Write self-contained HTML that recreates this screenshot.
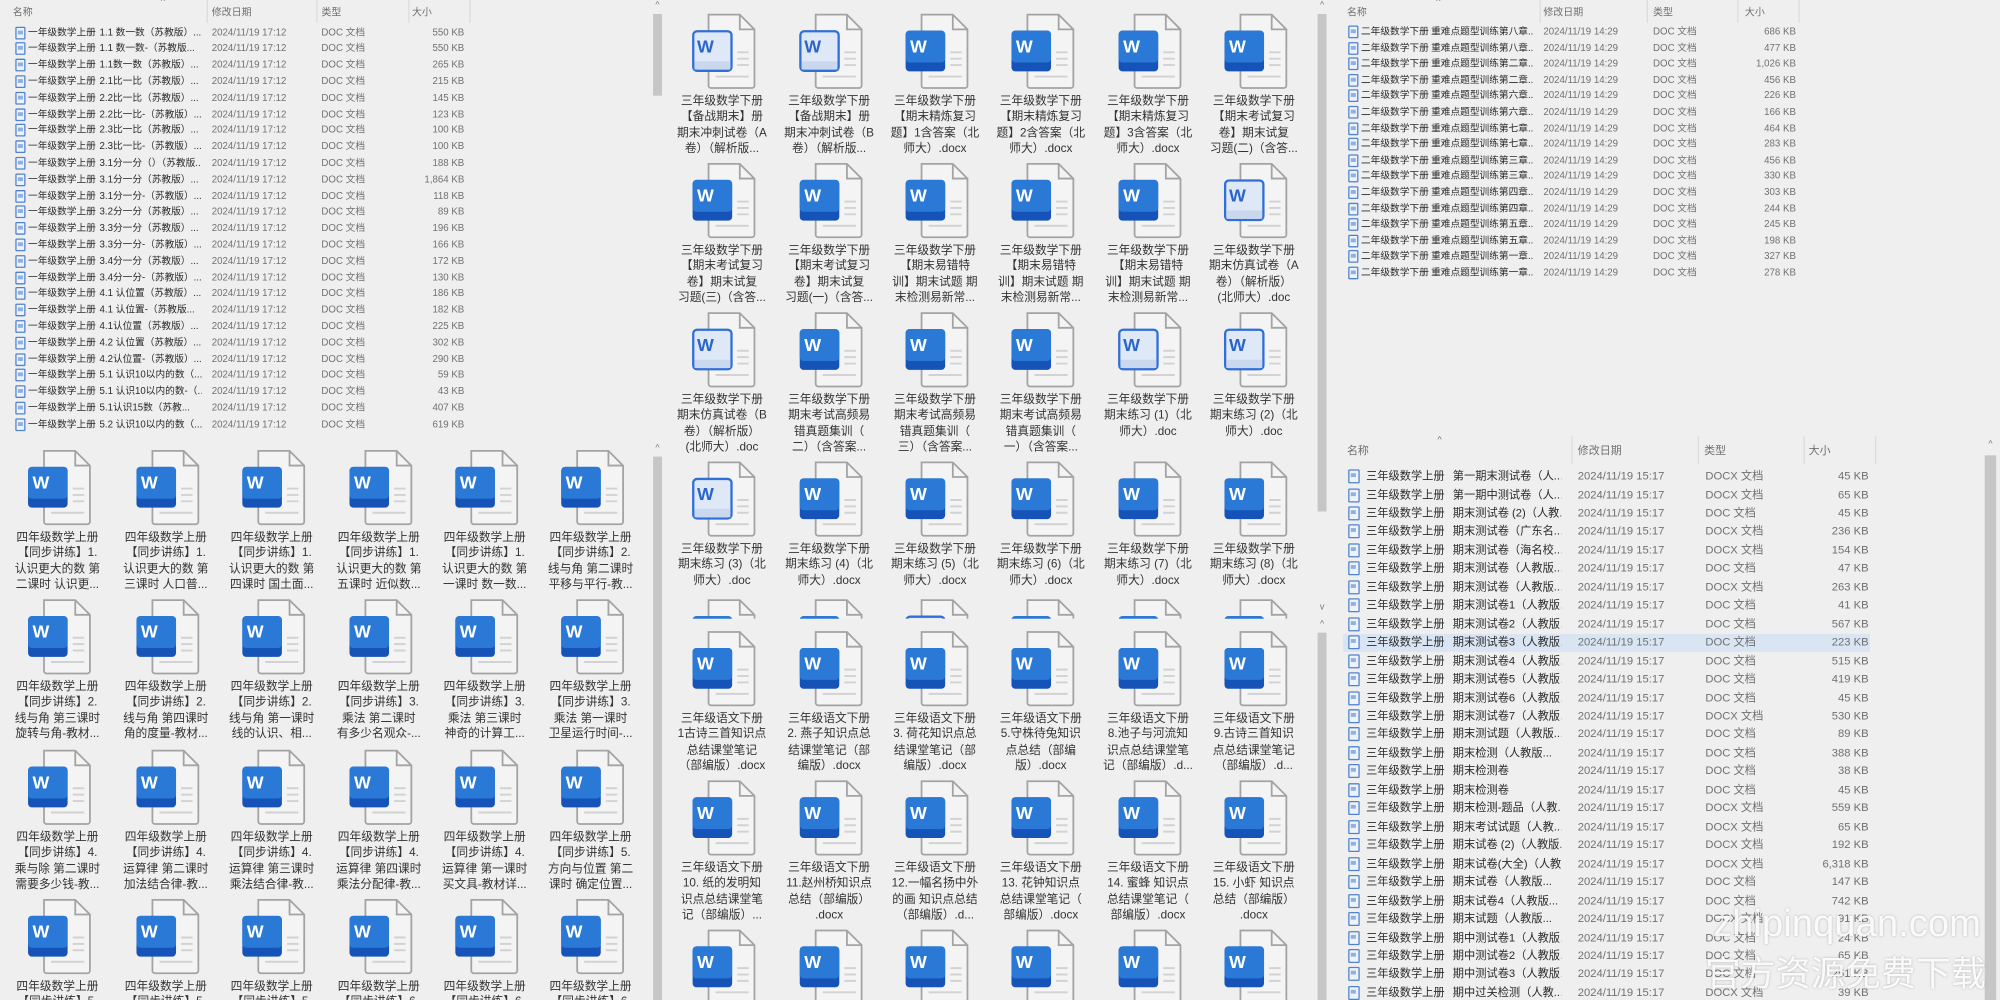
<!DOCTYPE html>
<html><head><meta charset="utf-8"><style>
html,body{margin:0;padding:0;width:2000px;height:1000px;overflow:hidden;background:#efefef}
#s{position:absolute;left:0;top:0;width:1568px;height:784px;transform:scale(1.27551);transform-origin:0 0;font-family:"Liberation Sans","Noto Sans CJK SC",sans-serif;color:#2a2a2a}
.a{position:absolute}
.win{position:absolute;overflow:hidden}
.row{position:absolute;height:10px;line-height:10px;font-size:7.6px;white-space:nowrap;left:0;right:0}
.row span{position:absolute;top:0}
.ic{width:6px;height:8px;border:1px solid #4f82cf;border-radius:1px;background:#eef3fb;top:0 !important}
.ic:after{content:"";position:absolute;left:1px;top:2px;width:4px;height:3px;background:#8fb0e3}
.n1{color:#2a2a2a}.n2{color:#2a2a2a;overflow:hidden;width:80px}
.d,.t{color:#707070}.sz{color:#707070;text-align:right;width:60px}
.hd{position:absolute;font-size:7.8px;color:#707070;white-space:nowrap}
.sep{position:absolute;width:1px;background:#dcdcdc}
.g{position:absolute;width:84px;text-align:center}
.g svg{display:block;width:52px;height:60px;margin:0 0 0 17px}
.g p{margin:3px 0 0 0;font-size:9.2px;line-height:12.3px;color:#333;white-space:nowrap}
.sb{position:absolute;background:#c6c6c6;width:7px}
.ar{position:absolute;font-size:7px;color:#777;width:9px;text-align:center}
.rb .row{height:12px;line-height:12px;font-size:8.8px}
.rb .ic{width:7px;height:9px;top:1px !important}
.rb .n2{width:85px}
</style></head><body>
<svg width="0" height="0" style="position:absolute"><defs>
<symbol id="w" viewBox="0 0 52 60">
<path d="M14.5 1.5H39L50.5 13V57a2 2 0 0 1-2 2H16.5a2 2 0 0 1-2-2Z" fill="#f4f4f4" stroke="#a3a3a3" stroke-width="1.4"/>
<path d="M39 1.5V13H50.5" fill="none" stroke="#a3a3a3" stroke-width="1.4"/>
<path d="M37 31h9M37 36h9M37 41h9M20 50h26" stroke="#d2d2d2" stroke-width="1.5"/>
<rect x="2" y="14" width="31" height="32" rx="3" fill="#1553b8"/>
<rect x="2" y="14" width="31" height="25" rx="3" fill="#2a79d6"/>
<text x="5.5" y="31" font-family="Liberation Sans" font-weight="bold" font-size="14" fill="#fff">W</text>
</symbol>
<symbol id="l" viewBox="0 0 52 60">
<path d="M14.5 1.5H39L50.5 13V57a2 2 0 0 1-2 2H16.5a2 2 0 0 1-2-2Z" fill="#f4f4f4" stroke="#a3a3a3" stroke-width="1.4"/>
<path d="M39 1.5V13H50.5" fill="none" stroke="#a3a3a3" stroke-width="1.4"/>
<path d="M37 31h9M37 36h9M37 41h9M20 50h26" stroke="#d2d2d2" stroke-width="1.5"/>
<rect x="2.5" y="14.5" width="30" height="31" rx="3" fill="#dfe8f6" stroke="#2f6fd6" stroke-width="1.8"/>
<rect x="3.5" y="38" width="28" height="6.5" fill="#c9d8ef"/>
<text x="5.5" y="31" font-family="Liberation Sans" font-weight="bold" font-size="14" fill="#2a66c9">W</text>
</symbol>
</defs></svg>
<div id="s">

<!-- LEFT TOP LIST -->
<div class="win" style="left:0;top:0;width:512px;height:346px">
<div class="hd" style="left:10px;top:4px">名称</div><div class="hd" style="left:126px;top:-2px;font-size:7px">^</div>
<div class="hd" style="left:166px;top:4px">修改日期</div><div class="hd" style="left:252px;top:4px">类型</div><div class="hd" style="left:323px;top:4px">大小</div>
<div class="sep" style="left:162px;top:0;height:18px"></div><div class="sep" style="left:248px;top:0;height:18px"></div><div class="sep" style="left:320px;top:0;height:18px"></div><div class="sep" style="left:368px;top:0;height:18px"></div>
<div class="row" style="top:20.5px"><span class="ic" style="left:12px"></span><span class="n1" style="left:22px">一年级数学上册</span><span class="n2" style="left:78px">1.1  数一数（苏教版）...</span><span class="d" style="left:166px">2024/11/19 17:12</span><span class="t" style="left:252px">DOC 文档</span><span class="sz" style="left:304px">550 KB</span></div>
<div class="row" style="top:33.3px"><span class="ic" style="left:12px"></span><span class="n1" style="left:22px">一年级数学上册</span><span class="n2" style="left:78px">1.1  数一数-（苏教版...</span><span class="d" style="left:166px">2024/11/19 17:12</span><span class="t" style="left:252px">DOC 文档</span><span class="sz" style="left:304px">550 KB</span></div>
<div class="row" style="top:46.1px"><span class="ic" style="left:12px"></span><span class="n1" style="left:22px">一年级数学上册</span><span class="n2" style="left:78px">1.1数一数（苏教版）...</span><span class="d" style="left:166px">2024/11/19 17:12</span><span class="t" style="left:252px">DOC 文档</span><span class="sz" style="left:304px">265 KB</span></div>
<div class="row" style="top:58.9px"><span class="ic" style="left:12px"></span><span class="n1" style="left:22px">一年级数学上册</span><span class="n2" style="left:78px">2.1比一比（苏教版）...</span><span class="d" style="left:166px">2024/11/19 17:12</span><span class="t" style="left:252px">DOC 文档</span><span class="sz" style="left:304px">215 KB</span></div>
<div class="row" style="top:71.7px"><span class="ic" style="left:12px"></span><span class="n1" style="left:22px">一年级数学上册</span><span class="n2" style="left:78px">2.2比一比（苏教版）...</span><span class="d" style="left:166px">2024/11/19 17:12</span><span class="t" style="left:252px">DOC 文档</span><span class="sz" style="left:304px">145 KB</span></div>
<div class="row" style="top:84.5px"><span class="ic" style="left:12px"></span><span class="n1" style="left:22px">一年级数学上册</span><span class="n2" style="left:78px">2.2比一比-（苏教版）...</span><span class="d" style="left:166px">2024/11/19 17:12</span><span class="t" style="left:252px">DOC 文档</span><span class="sz" style="left:304px">123 KB</span></div>
<div class="row" style="top:97.3px"><span class="ic" style="left:12px"></span><span class="n1" style="left:22px">一年级数学上册</span><span class="n2" style="left:78px">2.3比一比（苏教版）...</span><span class="d" style="left:166px">2024/11/19 17:12</span><span class="t" style="left:252px">DOC 文档</span><span class="sz" style="left:304px">100 KB</span></div>
<div class="row" style="top:110.1px"><span class="ic" style="left:12px"></span><span class="n1" style="left:22px">一年级数学上册</span><span class="n2" style="left:78px">2.3比一比-（苏教版）...</span><span class="d" style="left:166px">2024/11/19 17:12</span><span class="t" style="left:252px">DOC 文档</span><span class="sz" style="left:304px">100 KB</span></div>
<div class="row" style="top:122.9px"><span class="ic" style="left:12px"></span><span class="n1" style="left:22px">一年级数学上册</span><span class="n2" style="left:78px">3.1分一分（）（苏教版...</span><span class="d" style="left:166px">2024/11/19 17:12</span><span class="t" style="left:252px">DOC 文档</span><span class="sz" style="left:304px">188 KB</span></div>
<div class="row" style="top:135.7px"><span class="ic" style="left:12px"></span><span class="n1" style="left:22px">一年级数学上册</span><span class="n2" style="left:78px">3.1分一分（苏教版）...</span><span class="d" style="left:166px">2024/11/19 17:12</span><span class="t" style="left:252px">DOC 文档</span><span class="sz" style="left:304px">1,864 KB</span></div>
<div class="row" style="top:148.5px"><span class="ic" style="left:12px"></span><span class="n1" style="left:22px">一年级数学上册</span><span class="n2" style="left:78px">3.1分一分-（苏教版）...</span><span class="d" style="left:166px">2024/11/19 17:12</span><span class="t" style="left:252px">DOC 文档</span><span class="sz" style="left:304px">118 KB</span></div>
<div class="row" style="top:161.3px"><span class="ic" style="left:12px"></span><span class="n1" style="left:22px">一年级数学上册</span><span class="n2" style="left:78px">3.2分一分（苏教版）...</span><span class="d" style="left:166px">2024/11/19 17:12</span><span class="t" style="left:252px">DOC 文档</span><span class="sz" style="left:304px">89 KB</span></div>
<div class="row" style="top:174.1px"><span class="ic" style="left:12px"></span><span class="n1" style="left:22px">一年级数学上册</span><span class="n2" style="left:78px">3.3分一分（苏教版）...</span><span class="d" style="left:166px">2024/11/19 17:12</span><span class="t" style="left:252px">DOC 文档</span><span class="sz" style="left:304px">196 KB</span></div>
<div class="row" style="top:186.9px"><span class="ic" style="left:12px"></span><span class="n1" style="left:22px">一年级数学上册</span><span class="n2" style="left:78px">3.3分一分-（苏教版）...</span><span class="d" style="left:166px">2024/11/19 17:12</span><span class="t" style="left:252px">DOC 文档</span><span class="sz" style="left:304px">166 KB</span></div>
<div class="row" style="top:199.7px"><span class="ic" style="left:12px"></span><span class="n1" style="left:22px">一年级数学上册</span><span class="n2" style="left:78px">3.4分一分（苏教版）...</span><span class="d" style="left:166px">2024/11/19 17:12</span><span class="t" style="left:252px">DOC 文档</span><span class="sz" style="left:304px">172 KB</span></div>
<div class="row" style="top:212.5px"><span class="ic" style="left:12px"></span><span class="n1" style="left:22px">一年级数学上册</span><span class="n2" style="left:78px">3.4分一分-（苏教版）...</span><span class="d" style="left:166px">2024/11/19 17:12</span><span class="t" style="left:252px">DOC 文档</span><span class="sz" style="left:304px">130 KB</span></div>
<div class="row" style="top:225.3px"><span class="ic" style="left:12px"></span><span class="n1" style="left:22px">一年级数学上册</span><span class="n2" style="left:78px">4.1  认位置（苏教版）...</span><span class="d" style="left:166px">2024/11/19 17:12</span><span class="t" style="left:252px">DOC 文档</span><span class="sz" style="left:304px">186 KB</span></div>
<div class="row" style="top:238.1px"><span class="ic" style="left:12px"></span><span class="n1" style="left:22px">一年级数学上册</span><span class="n2" style="left:78px">4.1  认位置-（苏教版...</span><span class="d" style="left:166px">2024/11/19 17:12</span><span class="t" style="left:252px">DOC 文档</span><span class="sz" style="left:304px">182 KB</span></div>
<div class="row" style="top:250.9px"><span class="ic" style="left:12px"></span><span class="n1" style="left:22px">一年级数学上册</span><span class="n2" style="left:78px">4.1认位置（苏教版）...</span><span class="d" style="left:166px">2024/11/19 17:12</span><span class="t" style="left:252px">DOC 文档</span><span class="sz" style="left:304px">225 KB</span></div>
<div class="row" style="top:263.7px"><span class="ic" style="left:12px"></span><span class="n1" style="left:22px">一年级数学上册</span><span class="n2" style="left:78px">4.2 认位置（苏教版）...</span><span class="d" style="left:166px">2024/11/19 17:12</span><span class="t" style="left:252px">DOC 文档</span><span class="sz" style="left:304px">302 KB</span></div>
<div class="row" style="top:276.5px"><span class="ic" style="left:12px"></span><span class="n1" style="left:22px">一年级数学上册</span><span class="n2" style="left:78px">4.2认位置-（苏教版）...</span><span class="d" style="left:166px">2024/11/19 17:12</span><span class="t" style="left:252px">DOC 文档</span><span class="sz" style="left:304px">290 KB</span></div>
<div class="row" style="top:289.3px"><span class="ic" style="left:12px"></span><span class="n1" style="left:22px">一年级数学上册</span><span class="n2" style="left:78px">5.1 认识10以内的数（...</span><span class="d" style="left:166px">2024/11/19 17:12</span><span class="t" style="left:252px">DOC 文档</span><span class="sz" style="left:304px">59 KB</span></div>
<div class="row" style="top:302.1px"><span class="ic" style="left:12px"></span><span class="n1" style="left:22px">一年级数学上册</span><span class="n2" style="left:78px">5.1 认识10以内的数-（...</span><span class="d" style="left:166px">2024/11/19 17:12</span><span class="t" style="left:252px">DOC 文档</span><span class="sz" style="left:304px">43 KB</span></div>
<div class="row" style="top:314.9px"><span class="ic" style="left:12px"></span><span class="n1" style="left:22px">一年级数学上册</span><span class="n2" style="left:78px">5.1认识15数（苏教...</span><span class="d" style="left:166px">2024/11/19 17:12</span><span class="t" style="left:252px">DOC 文档</span><span class="sz" style="left:304px">407 KB</span></div>
<div class="row" style="top:327.7px"><span class="ic" style="left:12px"></span><span class="n1" style="left:22px">一年级数学上册</span><span class="n2" style="left:78px">5.2 认识10以内的数（...</span><span class="d" style="left:166px">2024/11/19 17:12</span><span class="t" style="left:252px">DOC 文档</span><span class="sz" style="left:304px">619 KB</span></div>
</div>
<div class="ar" style="left:511px;top:1px">^</div>
<div class="sb" style="left:512px;top:11px;height:64px"></div>

<!-- LEFT GRID -->
<div class="win" style="left:0;top:346px;width:511px;height:438px">
<div class="g" style="left:3px;top:6px"><svg><use href="#w"/></svg><p>四年级数学上册<br>【同步讲练】1.<br>认识更大的数 第<br>二课时  认识更...</p></div>
<div class="g" style="left:88px;top:6px"><svg><use href="#w"/></svg><p>四年级数学上册<br>【同步讲练】1.<br>认识更大的数 第<br>三课时  人口普...</p></div>
<div class="g" style="left:171px;top:6px"><svg><use href="#w"/></svg><p>四年级数学上册<br>【同步讲练】1.<br>认识更大的数 第<br>四课时  国土面...</p></div>
<div class="g" style="left:255px;top:6px"><svg><use href="#w"/></svg><p>四年级数学上册<br>【同步讲练】1.<br>认识更大的数 第<br>五课时  近似数...</p></div>
<div class="g" style="left:338px;top:6px"><svg><use href="#w"/></svg><p>四年级数学上册<br>【同步讲练】1.<br>认识更大的数 第<br>一课时  数一数...</p></div>
<div class="g" style="left:421px;top:6px"><svg><use href="#w"/></svg><p>四年级数学上册<br>【同步讲练】2.<br>线与角 第二课时<br>平移与平行-教...</p></div>
<div class="g" style="left:3px;top:123px"><svg><use href="#w"/></svg><p>四年级数学上册<br>【同步讲练】2.<br>线与角 第三课时<br>旋转与角-教材...</p></div>
<div class="g" style="left:88px;top:123px"><svg><use href="#w"/></svg><p>四年级数学上册<br>【同步讲练】2.<br>线与角 第四课时<br>角的度量-教材...</p></div>
<div class="g" style="left:171px;top:123px"><svg><use href="#w"/></svg><p>四年级数学上册<br>【同步讲练】2.<br>线与角 第一课时<br>线的认识、相...</p></div>
<div class="g" style="left:255px;top:123px"><svg><use href="#w"/></svg><p>四年级数学上册<br>【同步讲练】3.<br>乘法 第二课时<br>有多少名观众-...</p></div>
<div class="g" style="left:338px;top:123px"><svg><use href="#w"/></svg><p>四年级数学上册<br>【同步讲练】3.<br>乘法 第三课时<br>神奇的计算工...</p></div>
<div class="g" style="left:421px;top:123px"><svg><use href="#w"/></svg><p>四年级数学上册<br>【同步讲练】3.<br>乘法 第一课时<br>卫星运行时间-...</p></div>
<div class="g" style="left:3px;top:241px"><svg><use href="#w"/></svg><p>四年级数学上册<br>【同步讲练】4.<br>乘与除 第二课时<br>需要多少钱-教...</p></div>
<div class="g" style="left:88px;top:241px"><svg><use href="#w"/></svg><p>四年级数学上册<br>【同步讲练】4.<br>运算律 第二课时<br>加法结合律-教...</p></div>
<div class="g" style="left:171px;top:241px"><svg><use href="#w"/></svg><p>四年级数学上册<br>【同步讲练】4.<br>运算律 第三课时<br>乘法结合律-教...</p></div>
<div class="g" style="left:255px;top:241px"><svg><use href="#w"/></svg><p>四年级数学上册<br>【同步讲练】4.<br>运算律 第四课时<br>乘法分配律-教...</p></div>
<div class="g" style="left:338px;top:241px"><svg><use href="#w"/></svg><p>四年级数学上册<br>【同步讲练】4.<br>运算律 第一课时<br>买文具-教材详...</p></div>
<div class="g" style="left:421px;top:241px"><svg><use href="#w"/></svg><p>四年级数学上册<br>【同步讲练】5.<br>方向与位置 第二<br>课时  确定位置...</p></div>
<div class="g" style="left:3px;top:358px"><svg><use href="#w"/></svg><p>四年级数学上册<br>【同步讲练】5.</p></div>
<div class="g" style="left:88px;top:358px"><svg><use href="#w"/></svg><p>四年级数学上册<br>【同步讲练】5.</p></div>
<div class="g" style="left:171px;top:358px"><svg><use href="#w"/></svg><p>四年级数学上册<br>【同步讲练】5.</p></div>
<div class="g" style="left:255px;top:358px"><svg><use href="#w"/></svg><p>四年级数学上册<br>【同步讲练】6.</p></div>
<div class="g" style="left:338px;top:358px"><svg><use href="#w"/></svg><p>四年级数学上册<br>【同步讲练】6.</p></div>
<div class="g" style="left:421px;top:358px"><svg><use href="#w"/></svg><p>四年级数学上册<br>【同步讲练】6.</p></div>
</div>
<div class="ar" style="left:511px;top:348px">^</div>
<div class="sb" style="left:512px;top:358px;height:426px"></div>

<!-- MIDDLE TOP -->
<div class="win" style="left:522px;top:0;width:508px;height:485px">
<div class="g" style="left:2px;top:10px"><svg><use href="#l"/></svg><p>三年级数学下册<br>【备战期末】册<br>期末冲刺试卷（A<br>卷）（解析版...</p></div>
<div class="g" style="left:86px;top:10px"><svg><use href="#l"/></svg><p>三年级数学下册<br>【备战期末】册<br>期末冲刺试卷（B<br>卷）（解析版...</p></div>
<div class="g" style="left:169px;top:10px"><svg><use href="#w"/></svg><p>三年级数学下册<br>【期末精炼复习<br>题】1含答案（北<br>师大）.docx</p></div>
<div class="g" style="left:252px;top:10px"><svg><use href="#w"/></svg><p>三年级数学下册<br>【期末精炼复习<br>题】2含答案（北<br>师大）.docx</p></div>
<div class="g" style="left:336px;top:10px"><svg><use href="#w"/></svg><p>三年级数学下册<br>【期末精炼复习<br>题】3含答案（北<br>师大）.docx</p></div>
<div class="g" style="left:419px;top:10px"><svg><use href="#w"/></svg><p>三年级数学下册<br>【期末考试复习<br>卷】期末试复<br>习题(二)（含答...</p></div>
<div class="g" style="left:2px;top:127px"><svg><use href="#w"/></svg><p>三年级数学下册<br>【期末考试复习<br>卷】期末试复<br>习题(三)（含答...</p></div>
<div class="g" style="left:86px;top:127px"><svg><use href="#w"/></svg><p>三年级数学下册<br>【期末考试复习<br>卷】期末试复<br>习题(一)（含答...</p></div>
<div class="g" style="left:169px;top:127px"><svg><use href="#w"/></svg><p>三年级数学下册<br>【期末易错特<br>训】期末试题 期<br>末检测易新常...</p></div>
<div class="g" style="left:252px;top:127px"><svg><use href="#w"/></svg><p>三年级数学下册<br>【期末易错特<br>训】期末试题 期<br>末检测易新常...</p></div>
<div class="g" style="left:336px;top:127px"><svg><use href="#w"/></svg><p>三年级数学下册<br>【期末易错特<br>训】期末试题 期<br>末检测易新常...</p></div>
<div class="g" style="left:419px;top:127px"><svg><use href="#l"/></svg><p>三年级数学下册<br>期末仿真试卷（A<br>卷）（解析版）<br>(北师大）.doc</p></div>
<div class="g" style="left:2px;top:244px"><svg><use href="#l"/></svg><p>三年级数学下册<br>期末仿真试卷（B<br>卷）（解析版）<br>(北师大）.doc</p></div>
<div class="g" style="left:86px;top:244px"><svg><use href="#w"/></svg><p>三年级数学下册<br>期末考试高频易<br>错真题集训（<br>二）（含答案...</p></div>
<div class="g" style="left:169px;top:244px"><svg><use href="#w"/></svg><p>三年级数学下册<br>期末考试高频易<br>错真题集训（<br>三）（含答案...</p></div>
<div class="g" style="left:252px;top:244px"><svg><use href="#w"/></svg><p>三年级数学下册<br>期末考试高频易<br>错真题集训（<br>一）（含答案...</p></div>
<div class="g" style="left:336px;top:244px"><svg><use href="#l"/></svg><p>三年级数学下册<br>期末练习 (1)（北<br>师大）.doc</p></div>
<div class="g" style="left:419px;top:244px"><svg><use href="#l"/></svg><p>三年级数学下册<br>期末练习 (2)（北<br>师大）.doc</p></div>
<div class="g" style="left:2px;top:361px"><svg><use href="#l"/></svg><p>三年级数学下册<br>期末练习 (3)（北<br>师大）.doc</p></div>
<div class="g" style="left:86px;top:361px"><svg><use href="#w"/></svg><p>三年级数学下册<br>期末练习 (4)（北<br>师大）.docx</p></div>
<div class="g" style="left:169px;top:361px"><svg><use href="#w"/></svg><p>三年级数学下册<br>期末练习 (5)（北<br>师大）.docx</p></div>
<div class="g" style="left:252px;top:361px"><svg><use href="#w"/></svg><p>三年级数学下册<br>期末练习 (6)（北<br>师大）.docx</p></div>
<div class="g" style="left:336px;top:361px"><svg><use href="#w"/></svg><p>三年级数学下册<br>期末练习 (7)（北<br>师大）.docx</p></div>
<div class="g" style="left:419px;top:361px"><svg><use href="#w"/></svg><p>三年级数学下册<br>期末练习 (8)（北<br>师大）.docx</p></div>
<div class="g" style="left:2px;top:469px"><svg><use href="#w"/></svg></div>
<div class="g" style="left:86px;top:469px"><svg><use href="#w"/></svg></div>
<div class="g" style="left:169px;top:469px"><svg><use href="#l"/></svg></div>
<div class="g" style="left:252px;top:469px"><svg><use href="#w"/></svg></div>
<div class="g" style="left:336px;top:469px"><svg><use href="#w"/></svg></div>
<div class="g" style="left:419px;top:469px"><svg><use href="#w"/></svg></div>
</div>
<div class="ar" style="left:1032px;top:1px">^</div>
<div class="sb" style="left:1033px;top:11px;height:390px"></div>
<div class="ar" style="left:1032px;top:473px">v</div>

<!-- MIDDLE BOTTOM -->
<div class="win" style="left:522px;top:487px;width:508px;height:297px">
<div class="g" style="left:2px;top:7px"><svg><use href="#w"/></svg><p>三年级语文下册<br>1古诗三首知识点<br>总结课堂笔记<br>（部编版）.docx</p></div>
<div class="g" style="left:86px;top:7px"><svg><use href="#w"/></svg><p>三年级语文下册<br>2. 燕子知识点总<br>结课堂笔记（部<br>编版）.docx</p></div>
<div class="g" style="left:169px;top:7px"><svg><use href="#w"/></svg><p>三年级语文下册<br>3. 荷花知识点总<br>结课堂笔记（部<br>编版）.docx</p></div>
<div class="g" style="left:252px;top:7px"><svg><use href="#w"/></svg><p>三年级语文下册<br>5.守株待兔知识<br>点总结（部编<br>版）.docx</p></div>
<div class="g" style="left:336px;top:7px"><svg><use href="#w"/></svg><p>三年级语文下册<br>8.池子与河流知<br>识点总结课堂笔<br>记（部编版）.d...</p></div>
<div class="g" style="left:419px;top:7px"><svg><use href="#w"/></svg><p>三年级语文下册<br>9.古诗三首知识<br>点总结课堂笔记<br>（部编版）.d...</p></div>
<div class="g" style="left:2px;top:124px"><svg><use href="#w"/></svg><p>三年级语文下册<br>10. 纸的发明知<br>识点总结课堂笔<br>记（部编版）...</p></div>
<div class="g" style="left:86px;top:124px"><svg><use href="#w"/></svg><p>三年级语文下册<br>11.赵州桥知识点<br>总结（部编版）<br>.docx</p></div>
<div class="g" style="left:169px;top:124px"><svg><use href="#w"/></svg><p>三年级语文下册<br>12.一幅名扬中外<br>的画 知识点总结<br>（部编版）.d...</p></div>
<div class="g" style="left:252px;top:124px"><svg><use href="#w"/></svg><p>三年级语文下册<br>13. 花钟知识点<br>总结课堂笔记（<br>部编版）.docx</p></div>
<div class="g" style="left:336px;top:124px"><svg><use href="#w"/></svg><p>三年级语文下册<br>14. 蜜蜂 知识点<br>总结课堂笔记（<br>部编版）.docx</p></div>
<div class="g" style="left:419px;top:124px"><svg><use href="#w"/></svg><p>三年级语文下册<br>15. 小虾 知识点<br>总结（部编版）<br>.docx</p></div>
<div class="g" style="left:2px;top:241px"><svg><use href="#w"/></svg></div>
<div class="g" style="left:86px;top:241px"><svg><use href="#w"/></svg></div>
<div class="g" style="left:169px;top:241px"><svg><use href="#w"/></svg></div>
<div class="g" style="left:252px;top:241px"><svg><use href="#w"/></svg></div>
<div class="g" style="left:336px;top:241px"><svg><use href="#w"/></svg></div>
<div class="g" style="left:419px;top:241px"><svg><use href="#w"/></svg></div>
</div>
<div class="ar" style="left:1032px;top:486px">^</div>
<div class="sb" style="left:1033px;top:496px;height:288px"></div>

<!-- RIGHT TOP LIST -->
<div class="win" style="left:1045px;top:0;width:523px;height:340px">
<div class="hd" style="left:11px;top:4px">名称</div><div class="hd" style="left:81px;top:-2px;font-size:7px">^</div>
<div class="hd" style="left:165px;top:4px">修改日期</div><div class="hd" style="left:251px;top:4px">类型</div><div class="hd" style="left:323px;top:4px">大小</div>
<div class="sep" style="left:162px;top:0;height:18px"></div><div class="sep" style="left:246px;top:0;height:18px"></div><div class="sep" style="left:317px;top:0;height:18px"></div><div class="sep" style="left:365px;top:0;height:18px"></div>
<div class="row" style="top:20px"><span class="ic" style="left:12px"></span><span class="n1" style="left:22px">二年级数学下册</span><span class="n2" style="left:77px">重难点题型训练第八章...</span><span class="d" style="left:165px">2024/11/19 14:29</span><span class="t" style="left:251px">DOC 文档</span><span class="sz" style="left:303px">686 KB</span></div>
<div class="row" style="top:32.6px"><span class="ic" style="left:12px"></span><span class="n1" style="left:22px">二年级数学下册</span><span class="n2" style="left:77px">重难点题型训练第八章...</span><span class="d" style="left:165px">2024/11/19 14:29</span><span class="t" style="left:251px">DOC 文档</span><span class="sz" style="left:303px">477 KB</span></div>
<div class="row" style="top:45.2px"><span class="ic" style="left:12px"></span><span class="n1" style="left:22px">二年级数学下册</span><span class="n2" style="left:77px">重难点题型训练第二章...</span><span class="d" style="left:165px">2024/11/19 14:29</span><span class="t" style="left:251px">DOC 文档</span><span class="sz" style="left:303px">1,026 KB</span></div>
<div class="row" style="top:57.8px"><span class="ic" style="left:12px"></span><span class="n1" style="left:22px">二年级数学下册</span><span class="n2" style="left:77px">重难点题型训练第二章...</span><span class="d" style="left:165px">2024/11/19 14:29</span><span class="t" style="left:251px">DOC 文档</span><span class="sz" style="left:303px">456 KB</span></div>
<div class="row" style="top:70.4px"><span class="ic" style="left:12px"></span><span class="n1" style="left:22px">二年级数学下册</span><span class="n2" style="left:77px">重难点题型训练第六章...</span><span class="d" style="left:165px">2024/11/19 14:29</span><span class="t" style="left:251px">DOC 文档</span><span class="sz" style="left:303px">226 KB</span></div>
<div class="row" style="top:83px"><span class="ic" style="left:12px"></span><span class="n1" style="left:22px">二年级数学下册</span><span class="n2" style="left:77px">重难点题型训练第六章...</span><span class="d" style="left:165px">2024/11/19 14:29</span><span class="t" style="left:251px">DOC 文档</span><span class="sz" style="left:303px">166 KB</span></div>
<div class="row" style="top:95.6px"><span class="ic" style="left:12px"></span><span class="n1" style="left:22px">二年级数学下册</span><span class="n2" style="left:77px">重难点题型训练第七章...</span><span class="d" style="left:165px">2024/11/19 14:29</span><span class="t" style="left:251px">DOC 文档</span><span class="sz" style="left:303px">464 KB</span></div>
<div class="row" style="top:108.2px"><span class="ic" style="left:12px"></span><span class="n1" style="left:22px">二年级数学下册</span><span class="n2" style="left:77px">重难点题型训练第七章...</span><span class="d" style="left:165px">2024/11/19 14:29</span><span class="t" style="left:251px">DOC 文档</span><span class="sz" style="left:303px">283 KB</span></div>
<div class="row" style="top:120.8px"><span class="ic" style="left:12px"></span><span class="n1" style="left:22px">二年级数学下册</span><span class="n2" style="left:77px">重难点题型训练第三章...</span><span class="d" style="left:165px">2024/11/19 14:29</span><span class="t" style="left:251px">DOC 文档</span><span class="sz" style="left:303px">456 KB</span></div>
<div class="row" style="top:133.4px"><span class="ic" style="left:12px"></span><span class="n1" style="left:22px">二年级数学下册</span><span class="n2" style="left:77px">重难点题型训练第三章...</span><span class="d" style="left:165px">2024/11/19 14:29</span><span class="t" style="left:251px">DOC 文档</span><span class="sz" style="left:303px">330 KB</span></div>
<div class="row" style="top:146px"><span class="ic" style="left:12px"></span><span class="n1" style="left:22px">二年级数学下册</span><span class="n2" style="left:77px">重难点题型训练第四章...</span><span class="d" style="left:165px">2024/11/19 14:29</span><span class="t" style="left:251px">DOC 文档</span><span class="sz" style="left:303px">303 KB</span></div>
<div class="row" style="top:158.6px"><span class="ic" style="left:12px"></span><span class="n1" style="left:22px">二年级数学下册</span><span class="n2" style="left:77px">重难点题型训练第四章...</span><span class="d" style="left:165px">2024/11/19 14:29</span><span class="t" style="left:251px">DOC 文档</span><span class="sz" style="left:303px">244 KB</span></div>
<div class="row" style="top:171.2px"><span class="ic" style="left:12px"></span><span class="n1" style="left:22px">二年级数学下册</span><span class="n2" style="left:77px">重难点题型训练第五章...</span><span class="d" style="left:165px">2024/11/19 14:29</span><span class="t" style="left:251px">DOC 文档</span><span class="sz" style="left:303px">245 KB</span></div>
<div class="row" style="top:183.8px"><span class="ic" style="left:12px"></span><span class="n1" style="left:22px">二年级数学下册</span><span class="n2" style="left:77px">重难点题型训练第五章...</span><span class="d" style="left:165px">2024/11/19 14:29</span><span class="t" style="left:251px">DOC 文档</span><span class="sz" style="left:303px">198 KB</span></div>
<div class="row" style="top:196.4px"><span class="ic" style="left:12px"></span><span class="n1" style="left:22px">二年级数学下册</span><span class="n2" style="left:77px">重难点题型训练第一章...</span><span class="d" style="left:165px">2024/11/19 14:29</span><span class="t" style="left:251px">DOC 文档</span><span class="sz" style="left:303px">327 KB</span></div>
<div class="row" style="top:209px"><span class="ic" style="left:12px"></span><span class="n1" style="left:22px">二年级数学下册</span><span class="n2" style="left:77px">重难点题型训练第一章...</span><span class="d" style="left:165px">2024/11/19 14:29</span><span class="t" style="left:251px">DOC 文档</span><span class="sz" style="left:303px">278 KB</span></div>
</div>

<!-- RIGHT BOTTOM LIST -->
<div class="win rb" style="left:1045px;top:340px;width:523px;height:444px">
<div class="hd" style="left:11px;top:7px;font-size:8.6px">名称</div><div class="hd" style="left:82px;top:2px;font-size:7px">^</div>
<div class="hd" style="left:192px;top:7px;font-size:8.6px">修改日期</div><div class="hd" style="left:291px;top:7px;font-size:8.6px">类型</div><div class="hd" style="left:373px;top:7px;font-size:8.6px">大小</div>
<div class="sep" style="left:187px;top:2px;height:22px"></div><div class="sep" style="left:286px;top:2px;height:22px"></div><div class="sep" style="left:369px;top:2px;height:22px"></div><div class="sep" style="left:425px;top:2px;height:22px"></div>
<div class="a" style="left:8px;top:157px;width:413px;height:14px;background:#d9e5f2"></div>
<div class="row" style="top:27px"><span class="ic" style="left:12px"></span><span class="n1" style="left:26px">三年级数学上册</span><span class="n2" style="left:94px">第一期末测试卷（人...</span><span class="d" style="left:192px">2024/11/19 15:17</span><span class="t" style="left:292px">DOCX 文档</span><span class="sz" style="left:360px">45 KB</span></div>
<div class="row" style="top:41.5px"><span class="ic" style="left:12px"></span><span class="n1" style="left:26px">三年级数学上册</span><span class="n2" style="left:94px">第一期中测试卷（人...</span><span class="d" style="left:192px">2024/11/19 15:17</span><span class="t" style="left:292px">DOCX 文档</span><span class="sz" style="left:360px">65 KB</span></div>
<div class="row" style="top:55.9px"><span class="ic" style="left:12px"></span><span class="n1" style="left:26px">三年级数学上册</span><span class="n2" style="left:94px">期末测试卷 (2)（人教...</span><span class="d" style="left:192px">2024/11/19 15:17</span><span class="t" style="left:292px">DOC 文档</span><span class="sz" style="left:360px">45 KB</span></div>
<div class="row" style="top:70.4px"><span class="ic" style="left:12px"></span><span class="n1" style="left:26px">三年级数学上册</span><span class="n2" style="left:94px">期末测试卷（广东名...</span><span class="d" style="left:192px">2024/11/19 15:17</span><span class="t" style="left:292px">DOCX 文档</span><span class="sz" style="left:360px">236 KB</span></div>
<div class="row" style="top:84.8px"><span class="ic" style="left:12px"></span><span class="n1" style="left:26px">三年级数学上册</span><span class="n2" style="left:94px">期末测试卷（海名校...</span><span class="d" style="left:192px">2024/11/19 15:17</span><span class="t" style="left:292px">DOCX 文档</span><span class="sz" style="left:360px">154 KB</span></div>
<div class="row" style="top:99.3px"><span class="ic" style="left:12px"></span><span class="n1" style="left:26px">三年级数学上册</span><span class="n2" style="left:94px">期末测试卷（人教版...</span><span class="d" style="left:192px">2024/11/19 15:17</span><span class="t" style="left:292px">DOC 文档</span><span class="sz" style="left:360px">47 KB</span></div>
<div class="row" style="top:113.8px"><span class="ic" style="left:12px"></span><span class="n1" style="left:26px">三年级数学上册</span><span class="n2" style="left:94px">期末测试卷（人教版...</span><span class="d" style="left:192px">2024/11/19 15:17</span><span class="t" style="left:292px">DOCX 文档</span><span class="sz" style="left:360px">263 KB</span></div>
<div class="row" style="top:128.2px"><span class="ic" style="left:12px"></span><span class="n1" style="left:26px">三年级数学上册</span><span class="n2" style="left:94px">期末测试卷1（人教版...</span><span class="d" style="left:192px">2024/11/19 15:17</span><span class="t" style="left:292px">DOC 文档</span><span class="sz" style="left:360px">41 KB</span></div>
<div class="row" style="top:142.7px"><span class="ic" style="left:12px"></span><span class="n1" style="left:26px">三年级数学上册</span><span class="n2" style="left:94px">期末测试卷2（人教版...</span><span class="d" style="left:192px">2024/11/19 15:17</span><span class="t" style="left:292px">DOC 文档</span><span class="sz" style="left:360px">567 KB</span></div>
<div class="row" style="top:157.1px"><span class="ic" style="left:12px"></span><span class="n1" style="left:26px">三年级数学上册</span><span class="n2" style="left:94px">期末测试卷3（人教版...</span><span class="d" style="left:192px">2024/11/19 15:17</span><span class="t" style="left:292px">DOC 文档</span><span class="sz" style="left:360px">223 KB</span></div>
<div class="row" style="top:171.6px"><span class="ic" style="left:12px"></span><span class="n1" style="left:26px">三年级数学上册</span><span class="n2" style="left:94px">期末测试卷4（人教版...</span><span class="d" style="left:192px">2024/11/19 15:17</span><span class="t" style="left:292px">DOC 文档</span><span class="sz" style="left:360px">515 KB</span></div>
<div class="row" style="top:186.1px"><span class="ic" style="left:12px"></span><span class="n1" style="left:26px">三年级数学上册</span><span class="n2" style="left:94px">期末测试卷5（人教版...</span><span class="d" style="left:192px">2024/11/19 15:17</span><span class="t" style="left:292px">DOC 文档</span><span class="sz" style="left:360px">419 KB</span></div>
<div class="row" style="top:200.5px"><span class="ic" style="left:12px"></span><span class="n1" style="left:26px">三年级数学上册</span><span class="n2" style="left:94px">期末测试卷6（人教版...</span><span class="d" style="left:192px">2024/11/19 15:17</span><span class="t" style="left:292px">DOC 文档</span><span class="sz" style="left:360px">45 KB</span></div>
<div class="row" style="top:215px"><span class="ic" style="left:12px"></span><span class="n1" style="left:26px">三年级数学上册</span><span class="n2" style="left:94px">期末测试卷7（人教版...</span><span class="d" style="left:192px">2024/11/19 15:17</span><span class="t" style="left:292px">DOCX 文档</span><span class="sz" style="left:360px">530 KB</span></div>
<div class="row" style="top:229.4px"><span class="ic" style="left:12px"></span><span class="n1" style="left:26px">三年级数学上册</span><span class="n2" style="left:94px">期末测试题（人教版...</span><span class="d" style="left:192px">2024/11/19 15:17</span><span class="t" style="left:292px">DOC 文档</span><span class="sz" style="left:360px">89 KB</span></div>
<div class="row" style="top:243.9px"><span class="ic" style="left:12px"></span><span class="n1" style="left:26px">三年级数学上册</span><span class="n2" style="left:94px">期末检测（人教版...</span><span class="d" style="left:192px">2024/11/19 15:17</span><span class="t" style="left:292px">DOC 文档</span><span class="sz" style="left:360px">388 KB</span></div>
<div class="row" style="top:258.4px"><span class="ic" style="left:12px"></span><span class="n1" style="left:26px">三年级数学上册</span><span class="n2" style="left:94px">期末检测卷</span><span class="d" style="left:192px">2024/11/19 15:17</span><span class="t" style="left:292px">DOC 文档</span><span class="sz" style="left:360px">38 KB</span></div>
<div class="row" style="top:272.8px"><span class="ic" style="left:12px"></span><span class="n1" style="left:26px">三年级数学上册</span><span class="n2" style="left:94px">期末检测卷</span><span class="d" style="left:192px">2024/11/19 15:17</span><span class="t" style="left:292px">DOC 文档</span><span class="sz" style="left:360px">45 KB</span></div>
<div class="row" style="top:287.3px"><span class="ic" style="left:12px"></span><span class="n1" style="left:26px">三年级数学上册</span><span class="n2" style="left:94px">期末检测-题品（人教...</span><span class="d" style="left:192px">2024/11/19 15:17</span><span class="t" style="left:292px">DOCX 文档</span><span class="sz" style="left:360px">559 KB</span></div>
<div class="row" style="top:301.7px"><span class="ic" style="left:12px"></span><span class="n1" style="left:26px">三年级数学上册</span><span class="n2" style="left:94px">期末考试试题（人教...</span><span class="d" style="left:192px">2024/11/19 15:17</span><span class="t" style="left:292px">DOCX 文档</span><span class="sz" style="left:360px">65 KB</span></div>
<div class="row" style="top:316.2px"><span class="ic" style="left:12px"></span><span class="n1" style="left:26px">三年级数学上册</span><span class="n2" style="left:94px">期末试卷 (2)（人教版...</span><span class="d" style="left:192px">2024/11/19 15:17</span><span class="t" style="left:292px">DOCX 文档</span><span class="sz" style="left:360px">192 KB</span></div>
<div class="row" style="top:330.7px"><span class="ic" style="left:12px"></span><span class="n1" style="left:26px">三年级数学上册</span><span class="n2" style="left:94px">期末试卷(大全)（人教...</span><span class="d" style="left:192px">2024/11/19 15:17</span><span class="t" style="left:292px">DOCX 文档</span><span class="sz" style="left:360px">6,318 KB</span></div>
<div class="row" style="top:345.1px"><span class="ic" style="left:12px"></span><span class="n1" style="left:26px">三年级数学上册</span><span class="n2" style="left:94px">期末试卷（人教版...</span><span class="d" style="left:192px">2024/11/19 15:17</span><span class="t" style="left:292px">DOC 文档</span><span class="sz" style="left:360px">147 KB</span></div>
<div class="row" style="top:359.6px"><span class="ic" style="left:12px"></span><span class="n1" style="left:26px">三年级数学上册</span><span class="n2" style="left:94px">期末试卷4（人教版...</span><span class="d" style="left:192px">2024/11/19 15:17</span><span class="t" style="left:292px">DOC 文档</span><span class="sz" style="left:360px">742 KB</span></div>
<div class="row" style="top:374px"><span class="ic" style="left:12px"></span><span class="n1" style="left:26px">三年级数学上册</span><span class="n2" style="left:94px">期末试题（人教版...</span><span class="d" style="left:192px">2024/11/19 15:17</span><span class="t" style="left:292px">DOCX 文档</span><span class="sz" style="left:360px">91 KB</span></div>
<div class="row" style="top:388.5px"><span class="ic" style="left:12px"></span><span class="n1" style="left:26px">三年级数学上册</span><span class="n2" style="left:94px">期中测试卷1（人教版...</span><span class="d" style="left:192px">2024/11/19 15:17</span><span class="t" style="left:292px">DOC 文档</span><span class="sz" style="left:360px">24 KB</span></div>
<div class="row" style="top:403px"><span class="ic" style="left:12px"></span><span class="n1" style="left:26px">三年级数学上册</span><span class="n2" style="left:94px">期中测试卷2（人教版...</span><span class="d" style="left:192px">2024/11/19 15:17</span><span class="t" style="left:292px">DOC 文档</span><span class="sz" style="left:360px">65 KB</span></div>
<div class="row" style="top:417.4px"><span class="ic" style="left:12px"></span><span class="n1" style="left:26px">三年级数学上册</span><span class="n2" style="left:94px">期中测试卷3（人教版...</span><span class="d" style="left:192px">2024/11/19 15:17</span><span class="t" style="left:292px">DOC 文档</span><span class="sz" style="left:360px">251 KB</span></div>
<div class="row" style="top:431.9px"><span class="ic" style="left:12px"></span><span class="n1" style="left:26px">三年级数学上册</span><span class="n2" style="left:94px">期中过关检测（人教...</span><span class="d" style="left:192px">2024/11/19 15:17</span><span class="t" style="left:292px">DOCX 文档</span><span class="sz" style="left:360px">39 KB</span></div>
</div>
<div class="ar" style="left:1556px;top:345px">^</div>
<div class="sb" style="left:1556px;top:357px;height:427px;width:9px"></div>

<!-- WATERMARK -->
<div class="a" style="left:1343px;top:708px;font-size:30px;line-height:34px;color:rgba(255,255,255,0.9);text-shadow:0 0 2px rgba(0,0,0,0.25);white-space:nowrap">zhipinquan.com</div>
<div class="a" style="left:1337px;top:743px;font-size:27.5px;line-height:36px;color:rgba(255,255,255,0.9);text-shadow:0 0 2px rgba(0,0,0,0.25);white-space:nowrap;font-family:'Noto Sans CJK SC',sans-serif">官方资源免费下载</div>
</div>
</body></html>
